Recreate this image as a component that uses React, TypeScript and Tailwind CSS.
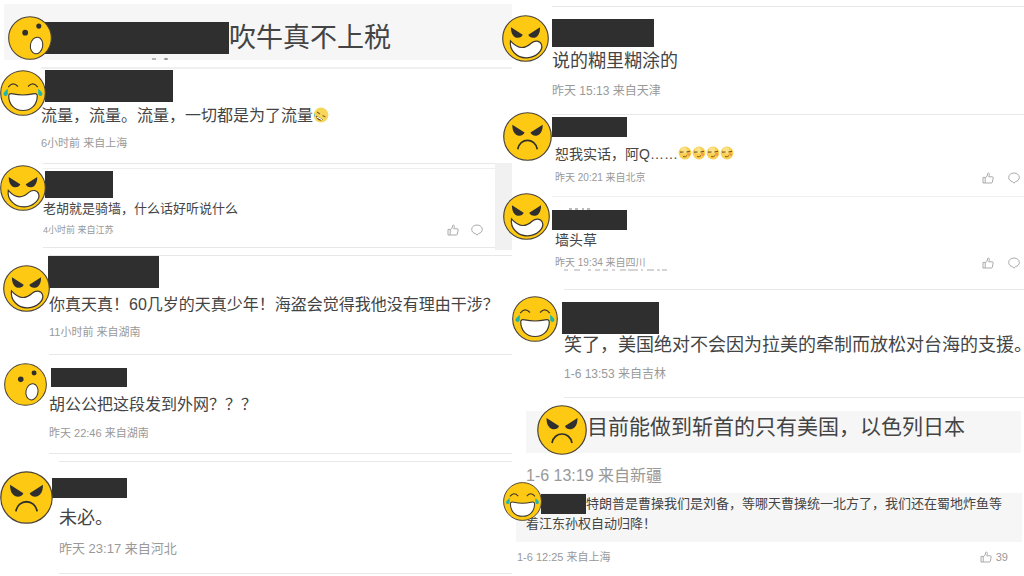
import type { ReactNode } from "react";

type Mood = "surprised" | "laughing" | "evil" | "angry";

function Eyes() {
  return (
    <g fill="#2f2f2f">
      <path d="M19 26 L44 42 C42 49 31 51 25 45 C20 40 19 33 19 26Z" />
      <path d="M81 26 L56 42 C58 49 69 51 75 45 C80 40 81 33 81 26Z" />
    </g>
  );
}

function Face({ mood, className }: { mood: Mood; className: string }) {
  return (
    <svg viewBox="0 0 100 100" aria-hidden="true" className={`absolute ${className}`}>
      <circle cx="50" cy="50" r="48.5" fill="#fdc912" stroke="#4a4238" strokeWidth="2.4" />
      {mood === "surprised" && (
        <>
          <circle cx="39" cy="38" r="6.5" fill="#2f2f2f" />
          <circle cx="70" cy="23" r="5.8" fill="#2f2f2f" />
          <ellipse cx="65" cy="67" rx="14" ry="19" fill="#fff" stroke="#3d3833" strokeWidth="2.4" transform="rotate(10 65 67)" />
        </>
      )}
      {mood === "laughing" && (
        <>
          <path d="M18 37 Q28 24 39 36 M61 36 Q72 24 82 37" fill="none" stroke="#3d3833" strokeWidth="2.8" />
          <path d="M17 41 C11 46 6 50 8 54 C11 59 17 56 17 51Z" fill="#1fb5ad" />
          <path d="M83 41 C89 46 94 50 92 54 C89 59 83 56 83 51Z" fill="#1fb5ad" />
          <path d="M19 56 C19 51 23 51 28 52 C42 55 58 55 72 52 C77 51 81 51 81 56 C81 75 69 88 50 88 C31 88 19 75 19 56Z" fill="#fff" stroke="#3d3833" strokeWidth="2.6" />
        </>
      )}
      {mood === "evil" && (
        <>
          <Eyes />
          <path d="M18 55 C15 75 32 92 53 91 C74 90 88 74 84 63 C81 54 70 53 62 60 C50 71 36 75 18 55Z" fill="#fff" stroke="#3d3833" strokeWidth="2.6" />
        </>
      )}
      {mood === "angry" && (
        <>
          <Eyes />
          <path d="M30 76 C34 52 66 52 70 76" fill="none" stroke="#2f2f2f" strokeWidth="3.4" />
        </>
      )}
    </svg>
  );
}

function Rofl() {
  return (
    <svg viewBox="0 0 16 16" aria-hidden="true" className="inline-block size-4 align-[-2px]">
      <circle cx="8" cy="8" r="7.4" fill="#f7d759" />
      <path d="M3 8.5 L10 12.5 C7.5 15 3.5 13 3 8.5Z" fill="#5f4420" />
      <path d="M4 10 L9 12.7" stroke="#fff" strokeWidth="1.2" />
      <path d="M4 5 L7 7 M9.5 8.5 L12.5 10" stroke="#8a6420" strokeWidth="1.1" />
      <path d="M1.5 6 Q0 9 2.2 10Z" fill="#6db7dd" />
    </svg>
  );
}

function Smirk() {
  return (
    <svg viewBox="0 0 14 14" aria-hidden="true" className="inline-block size-3.5 align-[-1px]">
      <circle cx="7" cy="7" r="6.4" fill="#f8cf4e" />
      <circle cx="6" cy="4.4" r="3.2" fill="#fbe288" />
      <path d="M2 6.2 L5.6 6 M8.4 6 L12 5.4" stroke="#7a5520" strokeWidth="1.2" />
      <circle cx="10.6" cy="8.4" r="1.6" fill="#f2a04a" />
      <path d="M5 10.6 Q7.5 11.4 9 9.6" fill="none" stroke="#8d5a1c" strokeWidth="1" />
    </svg>
  );
}

function Actions({ count, className }: { count?: number; className: string }) {
  return (
    <div className={`flex items-center text-[#999] ${className}`}>
      <button type="button" aria-label="赞" className="flex items-center gap-1 text-[11px]">
        <svg viewBox="0 0 12 12" className="size-3" fill="none" stroke="#aaa" strokeWidth="1">
          <path d="M1 5.4 H3.2 V11 H1Z M3.2 5.6 C5 5 5.4 3.6 5.6 1.6 C5.8 .6 7.3 .8 7.3 2.2 C7.3 3.2 7 4.1 6.8 4.8 H10.2 C11 4.8 11.3 5.3 11.2 6 L10.4 10 C10.2 10.7 9.9 11 9.2 11 H3.2" />
        </svg>
        {count}
      </button>
      {count === undefined && (
        <button type="button" aria-label="评论">
          <svg viewBox="0 0 12 12" className="size-3" fill="none" stroke="#aaa" strokeWidth="1">
            <path d="M4.6 9.7 C2.3 9.2 .7 7.6 .7 5.5 C.7 2.9 3 1 6 1 C9 1 11.3 2.9 11.3 5.5 C11.3 7.6 9.7 9.2 7.4 9.7 L6 11.2Z" />
          </svg>
        </button>
      )}
    </div>
  );
}

function Mask({ className }: { className: string }) {
  return <div className={`shrink-0 bg-[#2f2f2f] ${className}`} />;
}

function Body({ className, children }: { className: string; children: ReactNode }) {
  return <p className={`whitespace-nowrap text-[#444] ${className}`}>{children}</p>;
}

function Meta({ className, children }: { className: string; children: ReactNode }) {
  return <p className={`whitespace-nowrap text-[#999] ${className}`}>{children}</p>;
}

export default function App() {
  return (
    <main lang="zh-CN" className="flex overflow-hidden bg-white font-['Liberation_Sans','Noto_Sans_CJK_SC',sans-serif]">
      <section className="min-w-0 flex-1">
        <article className="relative pt-1">
          <div className="ml-1 flex h-14 bg-[#f6f6f6] pt-[18px] pl-[41px]">
            <Mask className="h-8 w-[184px]" />
            <Body className="text-[27px] leading-8">吹牛真不上税</Body>
          </div>
          <svg viewBox="0 0 18 2" aria-hidden="true" className="absolute bottom-0 left-[151px] h-0.5 w-[18px]">
            <path d="M1 1 H5 M13 1 H17 M15 0 V2" stroke="#777" />
          </svg>
          <Face mood="surprised" className="top-4 left-2 size-11" />
        </article>

        <article className="relative mt-[7px]">
          <div className="ml-[41px] border-t-2 border-[#efefef] pb-[7px]">
            <Mask className="mt-px ml-1 h-8 w-32" />
            <Body className="text-base leading-7">
              流量，流量。流量，一切都是为了流量
              <Rofl />
            </Body>
            <Meta className="text-[11px] leading-[26px]">6小时前 来自上海</Meta>
          </div>
          <Face mood="laughing" className="top-[3px] left-0 size-[46px]" />
        </article>

        <article className="relative flex">
          <div className="ml-[43px] flex-1 border-y border-[#e8e8e8] pt-1">
            <div className="border-t border-[#efefef] pt-0.5 pb-[7px]">
              <Mask className="ml-0.5 h-[27px] w-[68px]" />
              <Body className="text-[13px] leading-[22px]">老胡就是骑墙，什么话好听说什么</Body>
              <div className="flex items-center justify-between">
                <Meta className="text-[9px] leading-5">4小时前 来自江苏</Meta>
                <Actions className="gap-3 pr-3" />
              </div>
            </div>
          </div>
          <div className="-mb-0.5 w-[17px] bg-[#f1f1f1]" />
          <Face mood="evil" className="top-0.5 left-0 size-[46px]" />
        </article>

        <article className="relative mt-[7px]">
          <div className="ml-[49px] border-t border-[#e8e8e8] pb-3">
            <Mask className="-ml-px h-8 w-[111px]" />
            <Body className="text-base leading-[34px]">你真天真！60几岁的天真少年！海盗会觉得我他没有理由干涉？</Body>
            <Meta className="text-[11px] leading-5">11小时前 来自湖南</Meta>
          </div>
          <Face mood="evil" className="top-2.5 left-[3px] size-[47px]" />
        </article>

        <article className="relative">
          <div className="ml-[49px] border-y border-[#e8e8e8] pt-[13px] pb-2.5">
            <Mask className="ml-0.5 h-[19px] w-[76px]" />
            <Body className="text-base leading-9">胡公公把这段发到外网？？？</Body>
            <Meta className="text-[11px] leading-5">昨天 22:46 来自湖南</Meta>
          </div>
          <Face mood="surprised" className="top-[9px] left-1 size-[43px]" />
        </article>

        <article className="relative mt-[7px]">
          <div className="ml-[59px] border-y border-[#e8e8e8] pt-4 pb-[13px]">
            <Mask className="-ml-[7px] h-5 w-[75px]" />
            <Body className="text-lg leading-10">未必。</Body>
            <Meta className="text-[13px] leading-[22px]">昨天 23:17 来自河北</Meta>
          </div>
          <Face mood="angry" className="top-2.5 left-0 size-[53px]" />
        </article>
      </section>

      <section className="min-w-0 flex-1">
        <article className="relative mt-1.5">
          <div className="ml-10 border-t border-[#e8e8e8] pt-3 pb-[7px]">
            <Mask className="h-7 w-[102px]" />
            <Body className="text-lg leading-7">说的糊里糊涂的</Body>
            <Meta className="text-xs leading-8">昨天 15:13 来自天津</Meta>
          </div>
          <Face mood="evil" className="top-[9px] -left-2.5 size-[47px]" />
        </article>

        <article className="relative">
          <div className="ml-10 border-t border-[#e8e8e8] pt-0.5 pb-[11px]">
            <Mask className="h-5 w-[75px]" />
            <div className="pl-[3px]">
              <Body className="text-sm leading-[34px]">
                恕我实话，阿Q……
                <Smirk />
                <Smirk />
                <Smirk />
                <Smirk />
              </Body>
              <div className="flex items-center justify-between">
                <Meta className="text-[10px] leading-[14px]">昨天 20:21 来自北京</Meta>
                <Actions className="gap-3.5 pr-1" />
              </div>
            </div>
          </div>
          <Face mood="angry" className="-top-0.5 -left-[9px] size-[49px]" />
        </article>

        <article className="relative">
          <div className="ml-10 border-t border-[#efefef] pt-[13px] pb-[13px]">
            <Mask className="h-5 w-[75px]" />
            <div className="pl-[3px]">
              <Body className="text-sm leading-5">墙头草</Body>
              <div className="flex items-center justify-between">
                <Meta className="text-[10px] leading-[26px]">昨天 19:34 来自四川</Meta>
                <Actions className="gap-3.5 pr-1" />
              </div>
            </div>
          </div>
          <svg viewBox="0 0 104 2" aria-hidden="true" className="absolute top-[73px] left-[52px] h-0.5 w-[104px]">
            <path d="M0 1 H4 M10 1 H16 M24 1 H27 M31 1 H36 M39 1 H44 M48 1 H51 M56 1 H62 M64 1 H74 M77 1 H79 M83 1 H90 M93 1 H96 M98 1 H103" stroke="#aaa" />
          </svg>
          <svg viewBox="0 0 22 2" aria-hidden="true" className="absolute top-3 left-[57px] h-0.5 w-[22px]">
            <path d="M0 1 H3 M6 1 H9 M13 1 H15 M18 1 H21" stroke="#777" />
          </svg>
          <Face mood="evil" className="-top-[3px] -left-[9px] size-[47px]" />
        </article>

        <article className="relative">
          <div className="ml-[52px] border-t border-[#e8e8e8] pt-3 pb-[5px]">
            <Mask className="-ml-0.5 h-8 w-[97px]" />
            <Body className="text-lg leading-[22px]">笑了，美国绝对不会因为拉美的牵制而放松对台海的支援。</Body>
            <Meta className="text-xs leading-9">1-6 13:53 来自吉林</Meta>
          </div>
          <Face mood="laughing" className="top-[7px] left-0 size-[46px]" />
        </article>

        <article className="relative">
          <div className="ml-[52px] border-t border-[#e8e8e8]" />
          <div className="mt-[13px] mr-[3px] ml-3.5 h-[42px] bg-[#f6f6f6] pl-[61px]">
            <Body className="text-[21px] leading-8">目前能做到斩首的只有美国，以色列日本</Body>
          </div>
          <Meta className="ml-3.5 pt-1.5 text-base leading-[34px]">1-6 13:19 来自新疆</Meta>
          <Face mood="angry" className="top-2 left-[25px] size-[50px]" />
        </article>

        <article className="relative">
          <div className="mr-0.5 ml-1 bg-[#f6f6f6] pt-px pb-2 pl-2.5">
            <Body className="text-[13px] leading-5">
              <span className="ml-[15px] inline-block h-5 w-[45px] bg-[#2f2f2f] align-top" />
              特朗普是曹操我们是刘备，等哪天曹操统一北方了，我们还在蜀地炸鱼等
              <br />
              着江东孙权自动归降！
            </Body>
          </div>
          <div className="ml-[5px] flex items-center justify-between">
            <Meta className="text-[11px] leading-[30px]">1-6 12:25 来自上海</Meta>
            <Actions count={39} className="pr-4" />
          </div>
          <Face mood="laughing" className="-top-[11px] -left-[9px] size-[39px]" />
        </article>
      </section>
    </main>
  );
}
